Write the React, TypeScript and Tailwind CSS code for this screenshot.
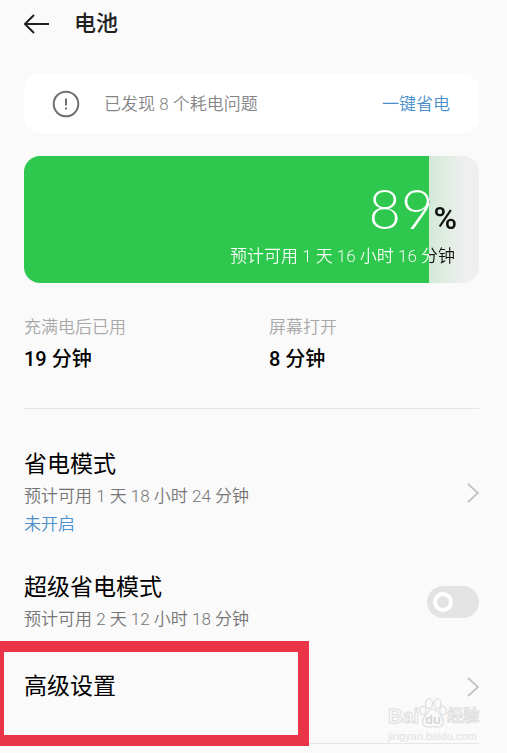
import { useState } from "react";

const stats = [
  { label: "充满电后已用", value: "19 分钟" },
  { label: "屏幕打开", value: "8 分钟" },
];

function Chevron() {
  return (
    <svg className="h-5 w-3 shrink-0" viewBox="0 0 12 20" fill="none" stroke="#c2c2c2" strokeWidth="1.8">
      <path d="M1 1l10 9-10 9" />
    </svg>
  );
}

function BatteryCard({ level, remaining }: { level: number; remaining: string }) {
  // the text turns from white to black where the charge ends
  const split = {
    backgroundImage: `linear-gradient(to right, #fff ${level}%, #111 ${level}%)`,
  };

  return (
    <section className="relative mt-[23px] h-[127px] overflow-hidden rounded-2xl bg-[#efefef]">
      <div className="absolute inset-0 flex">
        <div className="bg-[#2fc84e]" style={{ width: `${level}%` }} />
        <div className="w-9 bg-linear-to-r from-[#d3ead7] to-[#efefef]" />
      </div>
      <div className="relative pt-[22px] text-right">
        <p className="flex h-[60px] items-baseline justify-end bg-clip-text pr-[22px] leading-[60px] text-transparent" style={split}>
          <span className="font-[Lato] text-[56px] font-light">{level}</span>
          <span className="font-[Roboto] text-[32px] font-medium">%</span>
        </p>
        <p className="mt-[6px] bg-clip-text pr-6 text-[17px] leading-6 font-[350] text-transparent" style={split}>
          {remaining}
        </p>
      </div>
    </section>
  );
}

function Watermark() {
  return (
    <div className="pointer-events-none absolute right-[26px] bottom-[9px] w-[93px] font-['Liberation_Sans','Noto_Sans_CJK_SC',sans-serif] text-[#dedede]">
      <div className="flex items-end leading-6">
        <span className="text-[20px] font-bold text-[#fafafa] [-webkit-text-stroke:1px_#dedede]">Bai</span>
        <svg className="h-[30px] w-7" viewBox="0 0 28 30" fill="#fafafa" stroke="#dedede" strokeWidth="1.2">
          <path d="M14 11c-4 0-5 4-8 7-4 4-3 10 2 11 3 .6 4-.5 6-.5s3 1.100 6 .5c5-1 6-7 2-11-3-3-4-7-8-7z" />
          <ellipse cx="4" cy="12.500" rx="3.200" ry="4.400" />
          <ellipse cx="10" cy="5.500" rx="3.500" ry="4.800" />
          <ellipse cx="18.500" cy="5.500" rx="3.500" ry="4.800" />
          <ellipse cx="24" cy="12.500" rx="3.200" ry="4.400" />
          <text x="14" y="26" textAnchor="middle" fontSize="13" fontWeight="700" fill="#d6d6d6" stroke="none">
            du
          </text>
        </svg>
        <span className="text-[16px] font-bold text-[#fafafa] [-webkit-text-stroke:1px_#dedede]">经验</span>
      </div>
      <div className="text-[11px] leading-4 text-[#e2e2e2]">jingyan.baidu.com</div>
    </div>
  );
}

export default function App() {
  const [superSaver, setSuperSaver] = useState(false);

  return (
    <div className="relative min-h-screen overflow-hidden bg-[#fafafa] px-6 pb-2 font-[Roboto,'Noto_Sans_CJK_SC',sans-serif] text-black">
      <header className="flex h-12 items-center gap-6">
        <button type="button" aria-label="返回">
          <svg className="h-5 w-[26px]" viewBox="0 0 26 20" fill="none" stroke="#222" strokeWidth="2">
            <path d="M25 10H1M10 1L1 10l9 9" />
          </svg>
        </button>
        <h1 className="text-[22px] leading-8 font-medium text-[#222]">电池</h1>
      </header>

      <main className="pr-1">
        <section className="mt-[26px] flex h-[59px] items-center rounded-2xl bg-white pr-[29px] pl-7">
          <svg className="h-7 w-7" viewBox="0 0 28 28" fill="none" stroke="#707070" strokeWidth="2">
            <circle cx="14" cy="14" r="12.300" />
            <path d="M14 8.500v7M14 17.500v2" />
          </svg>
          <p className="ml-6 flex-1 text-[17px] leading-6 font-[350] text-[#858585]">已发现 8 个耗电问题</p>
          <button type="button" className="text-[17px] leading-6 font-[350] text-[#4a90cc]">
            一键省电
          </button>
        </section>

        <BatteryCard level={89} remaining="预计可用 1 天 16 小时 16 分钟" />

        <dl className="mt-8 grid grid-cols-[7fr_6fr] border-b border-[#e6e6e6] pb-[37px]">
          {stats.map((stat) => (
            <div key={stat.label}>
              <dt className="text-[17px] leading-6 font-[350] text-[#a8a8a8]">{stat.label}</dt>
              <dd className="mt-2 text-[20px] leading-6 font-medium">{stat.value}</dd>
            </div>
          ))}
        </dl>

        <button type="button" className="mt-10 flex w-full items-center justify-between text-left">
          <span className="flex flex-col">
            <span className="text-[23px] leading-8">省电模式</span>
            <span className="mt-[3px] text-[17px] leading-6 font-[350] text-[#757575]">预计可用 1 天 18 小时 24 分钟</span>
            <span className="mt-1 text-[17px] leading-6 font-[350] text-[#4a90cc]">未开启</span>
          </span>
          <Chevron />
        </button>

        <label className="mt-9 flex items-center justify-between">
          <span className="flex flex-col">
            <span className="text-[23px] leading-8">超级省电模式</span>
            <span className="mt-[3px] text-[17px] leading-6 font-[350] text-[#757575]">预计可用 2 天 12 小时 18 分钟</span>
          </span>
          <input
            type="checkbox"
            role="switch"
            checked={superSaver}
            onChange={(e) => setSuperSaver(e.target.checked)}
            className="flex h-8 w-[52px] shrink-0 appearance-none items-center rounded-full bg-[#e3e3e3] px-[6px] before:h-5 before:w-5 before:rounded-full before:border-4 before:border-white checked:justify-end checked:bg-[#2fc84e]"
          />
        </label>

        <div className="relative mt-10 border-b border-[#e6e6e6] pb-10">
          <button type="button" className="flex w-full items-center justify-between text-left">
            <span className="text-[23px] leading-8">高级设置</span>
            <Chevron />
          </button>
          <div className="pointer-events-none absolute -top-[30px] -left-[31px] h-[105px] w-[316px] border-[11px] border-[#ea3447]" />
        </div>
      </main>

      <Watermark />
    </div>
  );
}
